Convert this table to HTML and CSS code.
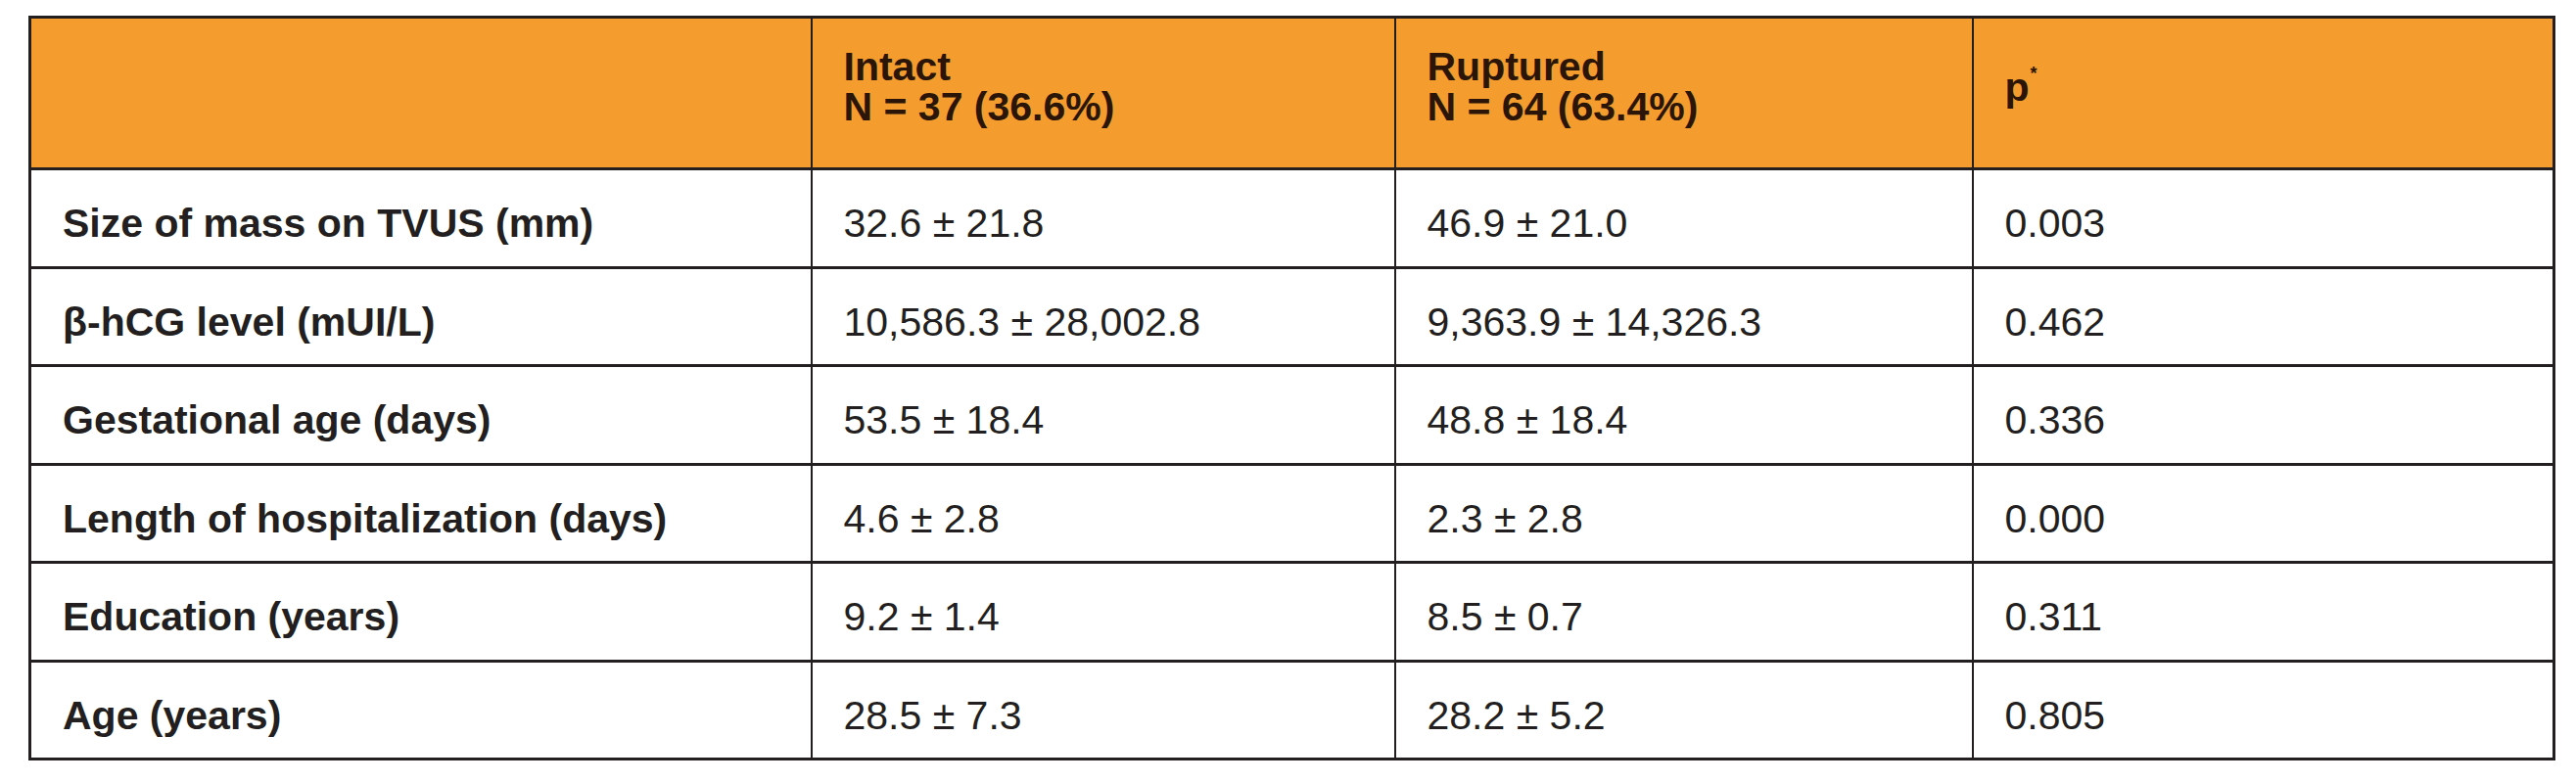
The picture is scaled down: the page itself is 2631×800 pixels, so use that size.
FILE: index.html
```html
<!DOCTYPE html>
<html>
<head>
<meta charset="utf-8">
<link rel="stylesheet" href="styles.css">
</head>
<body>
<table class="data">
  <colgroup>
    <col class="c1"><col class="c2"><col class="c3"><col class="c4">
  </colgroup>
  <thead>
    <tr>
      <th></th>
      <th>Intact<br>N = 37 (36.6%)</th>
      <th>Ruptured<br>N = 64 (63.4%)</th>
      <th>p<sup>*</sup></th>
    </tr>
  </thead>
  <tbody>
    <tr><td class="lbl">Size of mass on TVUS (mm)</td><td>32.6 ± 21.8</td><td>46.9 ± 21.0</td><td>0.003</td></tr>
    <tr><td class="lbl">β-hCG level (mUI/L)</td><td>10,586.3 ± 28,002.8</td><td>9,363.9 ± 14,326.3</td><td>0.462</td></tr>
    <tr><td class="lbl">Gestational age (days)</td><td>53.5 ± 18.4</td><td>48.8 ± 18.4</td><td>0.336</td></tr>
    <tr><td class="lbl">Length of hospitalization (days)</td><td>4.6 ± 2.8</td><td>2.3 ± 2.8</td><td>0.000</td></tr>
    <tr><td class="lbl">Education (years)</td><td>9.2 ± 1.4</td><td>8.5 ± 0.7</td><td>0.311</td></tr>
    <tr><td class="lbl">Age (years)</td><td>28.5 ± 7.3</td><td>28.2 ± 5.2</td><td>0.805</td></tr>
  </tbody>
</table>
</body>
</html>
```

FILE: styles.css
```css
html, body {
  margin: 0;
  padding: 0;
  background: #ffffff;
}

body {
  padding: 16px 0 0 29px;
  font-family: "Liberation Sans", Arial, sans-serif;
  color: #231f20;
}

.data {
  border-collapse: collapse;
  table-layout: fixed;
  width: 2578px;
}

.c1 { width: 798px; }
.c2 { width: 596px; }
.c3 { width: 590px; }
.c4 { width: 594px; }

.data th,
.data td {
  border-top: 3px solid #231f20;
  border-bottom: 3px solid #231f20;
  border-left: 2px solid #231f20;
  border-right: 2px solid #231f20;
  padding: 0 0 0 32px;
  text-align: left;
  vertical-align: middle;
  font-size: 41px;
  line-height: 48px;
}

.data tr > :first-child { border-left-width: 3px; }
.data tr > :last-child { border-right-width: 3px; }

.data thead th {
  background: #f49d2e;
  color: #2a1508;
  font-weight: bold;
  height: 140px;
  line-height: 41px;
  padding-bottom: 12px;
}

.data thead sup {
  font-size: 18px;
  line-height: 0;
  vertical-align: 22px;
  margin-left: 1px;
}

.data tbody td {
  height: 86.5px;
  padding-top: 11px;
  font-weight: normal;
}

.data tbody td.lbl {
  font-weight: bold;
}
```
